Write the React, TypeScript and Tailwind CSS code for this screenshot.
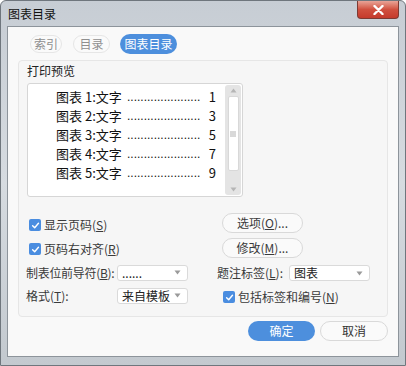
import React from "react";

const font = { fontFamily: '"Noto Sans CJK SC", "Microsoft YaHei", sans-serif' };

function Check() {
  return (
    <span className="flex h-[12px] w-[12px] shrink-0 items-center justify-center rounded-[2px] bg-[#4a8de0]">
      <svg width="9" height="9" viewBox="0 0 10 10">
        <path d="M1.8 5.2 L4.1 7.4 L8.3 2.6" fill="none" stroke="#fff" strokeWidth="1.6" strokeLinecap="round" strokeLinejoin="round" />
      </svg>
    </span>
  );
}

function Select({ value, w }: { value: string; w: string }) {
  return (
    <div className={`flex h-[16px] ${w} shrink-0 items-center justify-between rounded-[3px] border border-[#dadada] bg-white pl-[4px] pr-[6px]`}>
      <span className="whitespace-nowrap text-[12px] leading-[14px] text-[#222]">{value}</span>
      <svg className="shrink-0" width="7" height="5" viewBox="0 0 7 5">
        <path d="M0.5 0.5 L6.5 0.5 L3.5 4.5 Z" fill="#9a9a9a" />
      </svg>
    </div>
  );
}

const entries = [
  ["1", "1"],
  ["2", "3"],
  ["3", "5"],
  ["4", "7"],
  ["5", "9"],
];

export default function App() {
  return (
    <div
      className="flex h-[366px] w-[406px] flex-col overflow-hidden rounded-t-[6px] border border-[#6f767d] bg-gradient-to-b from-[#c7cdd4] via-[#d6dbe0] to-[#c3c9cf] text-[#3a3a3a]"
      style={font}
    >
      <div className="relative flex h-[25px] shrink-0 items-center pl-[7px]">
        <span className="text-[12px] text-[#111]">图表目录</span>
        <div className="absolute right-[6px] top-0 flex h-[18px] w-[42px] items-center justify-center rounded-b-[4px] border border-t-0 border-[#7d3a33] bg-gradient-to-b from-[#e8a397] via-[#d0503f] to-[#c53a2c]">
          <svg width="11" height="10" viewBox="0 0 11 10">
            <path d="M1.5 1 L9.5 9 M9.5 1 L1.5 9" stroke="#fff" strokeWidth="2.4" strokeLinecap="round" />
          </svg>
        </div>
      </div>
      <div className="mx-[6px] mb-[8px] flex flex-1 flex-col border border-[#8d949b] bg-[#f9f9f9]">
        <div className="mt-[7px] flex h-[20px] items-center pl-[22px] text-[12px]">
          <div className="flex h-[18px] w-[32px] items-center justify-center rounded-full border border-[#e6e6e6] bg-[#fafafa] text-[#8f8f8f]">索引</div>
          <div className="ml-[11px] flex h-[18px] w-[37px] items-center justify-center rounded-full border border-[#e6e6e6] bg-[#fafafa] text-[#8f8f8f]">目录</div>
          <div className="ml-[10px] flex h-[20px] w-[57px] items-center justify-center rounded-full bg-[#4d8fdd] text-white">图表目录</div>
        </div>
        <div className="mx-[10px] mt-[6px] flex flex-col rounded-[4px] border border-[#e6e6e6] bg-[#f6f6f6] pb-[9px] pl-[8px] pt-[2px]">
          <div className="text-[12px] leading-[16px] text-[#222]">打印预览</div>
          <div className="mt-[4px] flex h-[114px] w-[216px] rounded-[3px] border border-[#d6d6d6] bg-white">
            <div className="flex flex-1 flex-col pl-[28px] pt-[3px]">
              {entries.map(([n, p]) => (
                <div key={n} className="flex h-[19px] items-center text-[13px] text-[#111]">
                  <span className="w-[71px] whitespace-nowrap">图表 {n}:文字</span>
                  <span className="w-[74px] overflow-hidden whitespace-nowrap text-[12px]" style={{ fontFamily: '"Liberation Sans", sans-serif' }}>
                    ......................
                  </span>
                  <span className="w-[15px] text-right">{p}</span>
                </div>
              ))}
            </div>
            <div className="my-[1px] mr-[1px] flex w-[16px] flex-col items-center rounded-[3px] bg-[#e4e4e4]">
              <svg className="mt-[3px]" width="7" height="5" viewBox="0 0 7 5">
                <path d="M0.5 4.5 L6.5 4.5 L3.5 0.5 Z" fill="#b5b5b5" />
              </svg>
              <div className="mt-[3px] flex h-[75px] w-[11px] items-center justify-center rounded-[2px] border border-[#d8d8d8] bg-white">
                <svg width="6" height="6" viewBox="0 0 6 6">
                  <path d="M0 1 H6 M0 3 H6 M0 5 H6" stroke="#a0a0a0" strokeWidth="0.8" />
                </svg>
              </div>
              <div className="flex-1" />
              <svg className="mb-[3px]" width="7" height="5" viewBox="0 0 7 5">
                <path d="M0.5 0.5 L6.5 0.5 L3.5 4.5 Z" fill="#b5b5b5" />
              </svg>
            </div>
          </div>
          <div className="mt-[16px] flex text-[12px]">
            <div className="flex w-[190px] flex-col">
              <div className="flex h-[24px] items-center gap-[3px] pl-[2px]">
                <Check />
                <span className="whitespace-nowrap">显示页码(<span className="underline">S</span>)</span>
              </div>
              <div className="flex h-[24px] items-center gap-[3px] pl-[2px]">
                <Check />
                <span className="whitespace-nowrap">页码右对齐(<span className="underline">R</span>)</span>
              </div>
              <div className="flex h-[23px] items-center">
                <span className="-ml-[1px] w-[91px] shrink-0 whitespace-nowrap tracking-[-0.3px]">制表位前导符(<span className="underline">B</span>):</span>
                <Select value="......" w="w-[71px]" />
              </div>
              <div className="flex h-[23px] items-center">
                <span className="-ml-[1px] w-[91px] shrink-0 whitespace-nowrap">格式(<span className="underline">T</span>):</span>
                <Select value="来自模板" w="w-[71px]" />
              </div>
            </div>
            <div className="flex flex-col">
              <div className="ml-[5px] flex h-[20px] w-[81px] items-center justify-center whitespace-nowrap rounded-full border border-[#d9d9d9] bg-[#fafafa]">
                选项(<span className="underline">O</span>)...
              </div>
              <div className="ml-[5px] mt-[5px] flex h-[20px] w-[81px] items-center justify-center whitespace-nowrap rounded-full border border-[#d9d9d9] bg-[#fafafa]">
                修改(<span className="underline">M</span>)...
              </div>
              <div className="mt-[7px] flex h-[16px] items-center">
                <span className="w-[72px] shrink-0 whitespace-nowrap">题注标签(<span className="underline">L</span>):</span>
                <Select value="图表" w="w-[81px]" />
              </div>
              <div className="ml-[6px] mt-[10px] flex h-[12px] items-center gap-[3px]">
                <Check />
                <span className="whitespace-nowrap">包括标签和编号(<span className="underline">N</span>)</span>
              </div>
            </div>
          </div>
        </div>
        <div className="mr-[10px] mt-[4px] flex justify-end gap-[5px] text-[12px]">
          <div className="flex h-[20px] w-[67px] items-center justify-center rounded-full bg-[#4d8fdd] text-white">确定</div>
          <div className="flex h-[20px] w-[68px] items-center justify-center rounded-full border border-[#d9d9d9] bg-[#fafafa] text-[#333]">取消</div>
        </div>
      </div>
    </div>
  );
}
